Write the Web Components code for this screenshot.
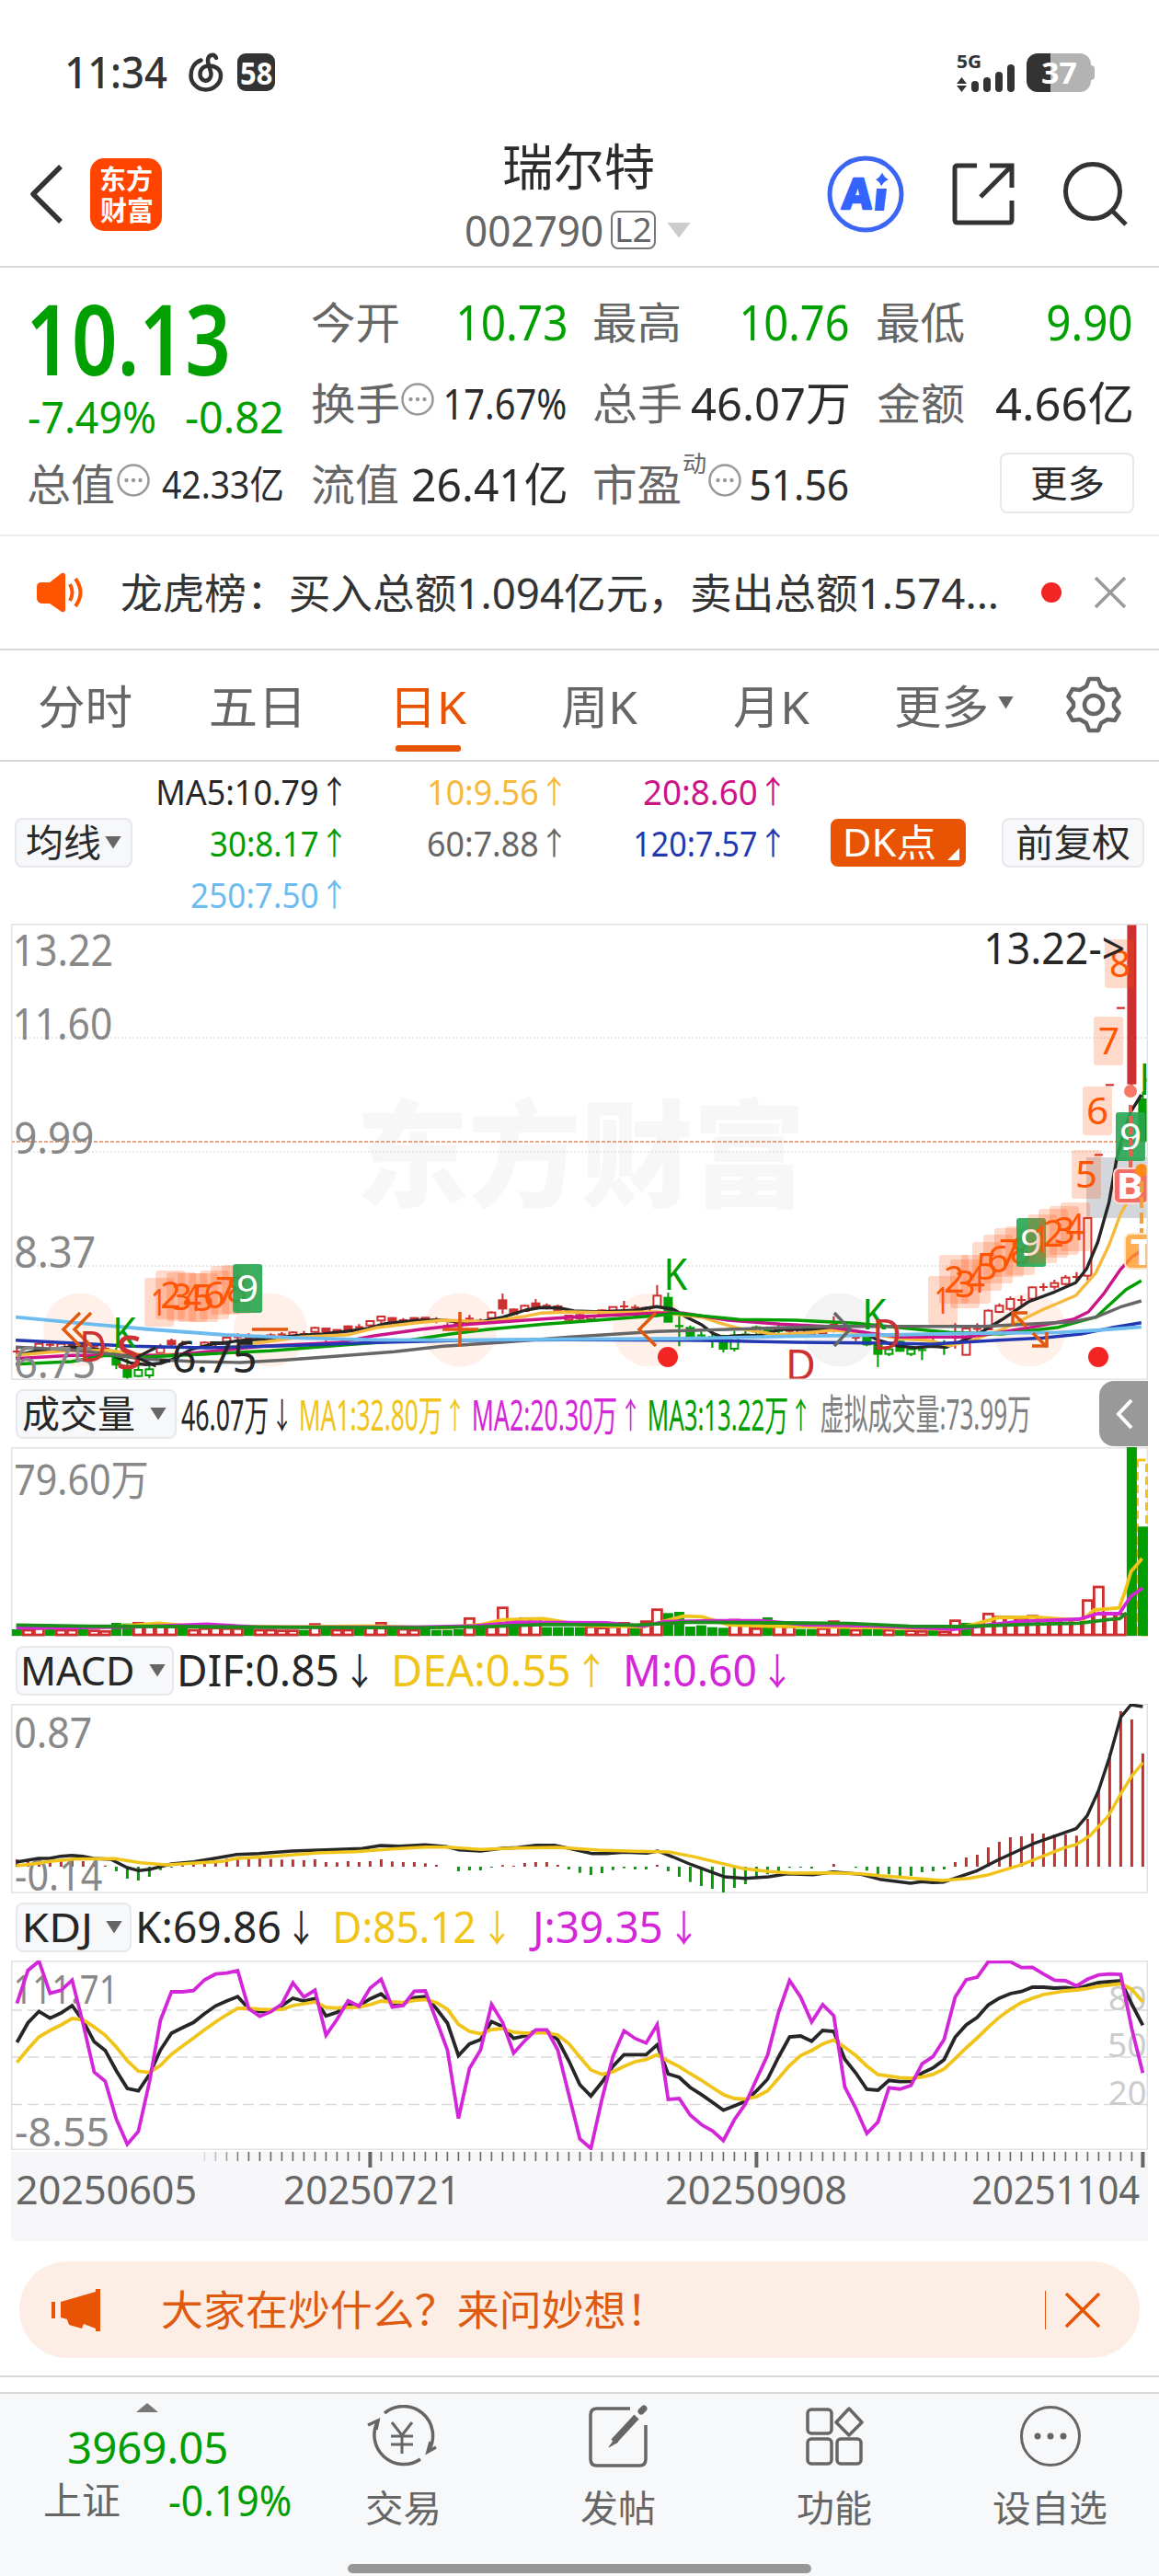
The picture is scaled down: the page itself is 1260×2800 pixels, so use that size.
<!DOCTYPE html>
<html lang="zh-CN">
  <head>
    <meta charset="UTF-8" />
    <meta name="viewport" content="width=device-width, initial-scale=1.0" />
    <title>瑞尔特 002790</title>
    <style>
      body {
        margin: 0;
        width: 1260px;
        height: 2800px;
        overflow: hidden;
        background: #fff;
        color: #2b2b2b;
        font-family: 'Noto Sans', 'Noto Sans CJK SC', sans-serif;
      }
    </style>
  </head>
  <body>
    <stock-page></stock-page>
    <script type="text/javascript">
      const FONT = "'Noto Sans', 'Noto Sans CJK SC', sans-serif"
      const RED = '#cc3030'
      const GREEN = '#009e00'
      const YELLOW = '#f0c419'
      const PINK = '#d426d9'
      const BLACK = '#262626'
      const ctx = document.createElement('canvas').getContext('2d')

      // ink box of a string: left bearing and painted width
      function measure(text, size, weight) {
        ctx.font = `${weight} ${size}px ${FONT}`
        const m = ctx.measureText(text)
        return { left: m.actualBoundingBoxLeft, width: m.actualBoundingBoxLeft + m.actualBoundingBoxRight }
      }

      function define(name, css, html) {
        customElements.define(
          name,
          class extends HTMLElement {
            constructor() {
              super()
              this.attachShadow({ mode: 'open' })
              const content = typeof html === 'function' ? html(this) : html
              this.shadowRoot.innerHTML = `<style>${css}</style>${content}`
            }
          }
        )
      }

      // text squeezed to a given ink width: <fit-text w="120" s="40">
      class FitText extends HTMLElement {
        connectedCallback() {
          const size = +this.getAttribute('s')
          const w = +this.getAttribute('w')
          const weight = this.getAttribute('b') || 400
          const m = measure(this.textContent, size, weight)
          if (!this.shadowRoot) this.attachShadow({ mode: 'open' })
          this.shadowRoot.innerHTML = `
            <style>
              :host { display: block; flex: none; width: ${w}px; height: ${size}px; font-size: ${size}px; line-height: ${size}px; font-weight: ${weight}; white-space: nowrap; }
              span { display: inline-block; transform-origin: 0 50%; transform: scaleX(${w / m.width}) translateX(${m.left}px); }
            </style>
            <span><slot></slot></span>
          `
        }
      }
      customElements.define('fit-text', FitText)

      define(
        'down-mark',
        `:host { display: block; flex: none; width: 18px; height: 14px; background: #666; clip-path: polygon(0 0, 100% 0, 50% 100%); }`,
        ``
      )

      define(
        'status-bar',
        `
          :host { display: flex; align-items: center; height: 121px; padding: 0 70px 0 73px; box-sizing: border-box; color: #333; }
          .row { display: flex; align-items: center; padding-top: 36px; }
          .grow { flex: 1; }
          .badge { width: 41px; height: 41px; border-radius: 9px; background: #333; color: #fff; display: flex; align-items: center; justify-content: center; margin-left: 16px; }
          .batt { width: 70px; height: 42px; border-radius: 12px; color: #fff; display: flex; align-items: center; justify-content: center; background: linear-gradient(90deg, #333 26px, #b3b3b3 26px); margin-left: 12px; }
          .nub { width: 4px; height: 16px; border-radius: 0 4px 4px 0; background: #b3b3b3; }
          svg { display: block; overflow: visible; }
        `,
        `
          <div class="row">
            <fit-text w="108" s="47" b="500">11:34</fit-text>
            <svg width="38" height="42" viewBox="0 0 38 42" style="margin-left:23px" fill="none" stroke="#333" stroke-width="4.500" stroke-linecap="round">
              <path d="M14.500 7.500C7 10 3.500 17 3.500 24A16.200 15.500 0 0 0 36 24C36 17 30 13.500 23 13.500C17 13.500 13.500 18 13.500 22.500A6 7 0 0 0 25.500 23C25.500 19 22 12 22 8C22 1 29 0 31 5" />
            </svg>
            <div class="badge"><fit-text w="34" s="34" b="700">58</fit-text></div>
          </div>
          <div class="grow"></div>
          <div class="row">
            <svg width="64" height="42" viewBox="0 0 64 42" fill="#333">
              <text x="0" y="16" font-size="20" font-weight="700" textLength="27" lengthAdjust="spacingAndGlyphs">5G</text>
              <path d="M0 33L5.500 26L11 33ZM0 35L5.500 42L11 35Z" />
              <rect x="16" y="30" width="8" height="12" rx="4" />
              <rect x="29" y="26" width="8" height="16" rx="4" />
              <rect x="42" y="20" width="8" height="22" rx="4" />
              <rect x="55" y="12" width="8" height="30" rx="4" />
            </svg>
            <div class="batt"><fit-text w="37" s="33" b="700">37</fit-text></div>
            <div class="nub"></div>
          </div>
        `
      )

      define(
        'nav-bar',
        `
          :host { display: grid; grid-template-columns: 1fr auto 1fr; align-items: center; height: 170px; padding: 12px 34px 0 32px; box-sizing: border-box; border-bottom: 2px solid #d9d9d9; }
          .left, .right, .code { display: flex; align-items: center; }
          .right { justify-content: flex-end; }
          .logo { width: 78px; height: 79px; margin-left: 30px; border-radius: 15px; background: #ff4400; color: #fff; display: flex; flex-direction: column; align-items: center; justify-content: center; gap: 5px; }
          .mid { display: flex; flex-direction: column; align-items: center; }
          .code { height: 42px; margin-top: 18px; color: #666; }
          .l2 { width: 45px; height: 38px; border: 2px solid #777; border-radius: 8px; margin-left: 9px; display: flex; align-items: center; justify-content: center; }
          down-mark { width: 26px; height: 17px; background: #ccc; margin-left: 12px; }
          svg { display: block; }
        `,
        `
          <div class="left">
            <svg width="36" height="64" viewBox="0 0 36 64" fill="none" stroke="#333" stroke-width="5.500"><path d="M34 2L4 32L34 62" stroke-linejoin="round" /></svg>
            <div class="logo"><fit-text w="56" s="29" b="700">东方</fit-text><fit-text w="56" s="29" b="700">财富</fit-text></div>
          </div>
          <div class="mid">
            <fit-text w="162" s="54" style="margin:3px 0">瑞尔特</fit-text>
            <div class="code"><fit-text w="148" s="46">002790</fit-text><div class="l2"><fit-text w="36" s="36">L2</fit-text></div><down-mark></down-mark></div>
          </div>
          <div class="right">
            <svg width="84" height="84" viewBox="0 0 84 84">
              <circle cx="42" cy="42" r="39" fill="none" stroke="#3b66f5" stroke-width="5" />
              <text transform="translate(16 58) skewX(-4)" font-size="46" font-weight="800" fill="#3464ff" textLength="32" lengthAdjust="spacingAndGlyphs" stroke="#3464ff" stroke-width="2.500" stroke-linejoin="round">A</text>
              <path d="M54 36H65L62 60H52Z" fill="#3464ff" />
              <path d="M60 17Q62 24 68 26Q62 28 59 34Q57 28 52 26Q58 24 60 17Z" fill="#3464ff" stroke="#fff" stroke-width="1" />
            </svg>
            <svg width="68" height="68" viewBox="0 0 68 68" style="margin-left:52px" fill="none" stroke="#333" stroke-width="5">
              <path d="M27 3H6Q3 3 3 6V62Q3 65 6 65H62Q65 65 65 62V41M41 3H65V27M65 3L31 37" />
            </svg>
            <svg width="70" height="70" viewBox="0 0 70 70" style="margin-left:53px" fill="none" stroke="#333" stroke-width="5"><circle cx="32" cy="32" r="29.500" /><path d="M53 53L68 68" /></svg>
          </div>
        `
      )

      define(
        'tip-dots',
        `:host { display: block; flex: none; margin: 0 0 8px 3px; height: 36px; } svg { display: block; }`,
        `<svg width="36" height="36" viewBox="0 0 36 36"><circle cx="18" cy="18" r="16.500" fill="none" stroke="#999" stroke-width="2.500" /><g fill="#999"><circle cx="10.500" cy="18" r="2.200" /><circle cx="18" cy="18" r="2.200" /><circle cx="25.500" cy="18" r="2.200" /></g></svg>`
      )

      define(
        'quote-cell',
        `:host { display: flex; align-items: center; height: 88px; } .label { display: flex; align-items: center; color: #666; flex: 1; }`,
        `<div class="label"><slot name="label"></slot></div><slot></slot>`
      )

      define(
        'quote-panel',
        `
          :host { display: block; height: 292px; box-sizing: border-box; border-bottom: 2px solid #ececec; padding: 15px 28px 0 31px; }
          .grid { display: grid; grid-template-columns: repeat(4, 276px); column-gap: 31.700px; grid-template-rows: repeat(3, 88px); }
          .price { grid-row: span 2; display: flex; flex-direction: column; color: #00a000; }
          .chg { display: flex; justify-content: space-between; margin-top: 10px; }
          .g { color: #00a000; }
          .more { justify-self: end; align-self: center; width: 142px; height: 62px; border: 2px solid #e8e8e8; border-radius: 8px; display: flex; align-items: center; justify-content: center; margin: -3px -3px 0 0; }
        `,
        `
          <div class="grid">
            <div class="price">
              <fit-text w="213" s="106" b="600" style="margin:8px 0 0 3px">10.13</fit-text>
              <div class="chg"><fit-text w="137" s="47">-7.49%</fit-text><fit-text w="105" s="47">-0.82</fit-text></div>
            </div>
            <quote-cell><fit-text slot="label" w="94" s="47">今开</fit-text><fit-text class="g" w="116" s="52">10.73</fit-text></quote-cell>
            <quote-cell><fit-text slot="label" w="93" s="47">最高</fit-text><fit-text class="g" w="115" s="52">10.76</fit-text></quote-cell>
            <quote-cell><fit-text slot="label" w="94" s="47">最低</fit-text><fit-text class="g" w="91" s="52">9.90</fit-text></quote-cell>
            <quote-cell><fit-text slot="label" w="94" s="47">换手</fit-text><tip-dots slot="label"></tip-dots><fit-text w="130" s="45">17.67%</fit-text></quote-cell>
            <quote-cell><fit-text slot="label" w="94" s="47">总手</fit-text><fit-text w="170" s="50">46.07万</fit-text></quote-cell>
            <quote-cell><fit-text slot="label" w="94" s="47">金额</fit-text><fit-text w="147" s="50">4.66亿</fit-text></quote-cell>
            <quote-cell><fit-text slot="label" w="93" s="47">总值</fit-text><tip-dots slot="label"></tip-dots><fit-text w="131" s="42">42.33亿</fit-text></quote-cell>
            <quote-cell><fit-text slot="label" w="94" s="47">流值</fit-text><fit-text w="166" s="50">26.41亿</fit-text></quote-cell>
            <quote-cell><fit-text slot="label" w="93" s="47">市盈</fit-text><fit-text slot="label" w="24" s="25" style="align-self:flex-start;margin:-12px 0 0 4px">动</fit-text><tip-dots slot="label"></tip-dots><fit-text w="106" s="46">51.56</fit-text></quote-cell>
            <div class="more"><fit-text w="78" s="40">更多</fit-text></div>
          </div>
        `
      )

      define(
        'notice-bar',
        `
          :host { display: flex; align-items: center; height: 124px; box-sizing: border-box; border-bottom: 2px solid #d9d9d9; padding-left: 40px; color: #333; }
          .dot { width: 22px; height: 22px; border-radius: 50%; background: #f22424; margin: 0 36px 0 49px; }
        `,
        `
          <svg width="51" height="44" viewBox="0 0 51 44"><path d="M5 11H14L27 1Q31 0 31 4V40Q31 44 27 43L14 34H5Q0 33 0 28V16Q0 11 5 11Z" fill="#ff5500" /><path d="M36 13Q41 22 36 31M42 7Q53 22 42 37" fill="none" stroke="#ff5500" stroke-width="4" /></svg>
          <fit-text w="951" s="45" style="margin-left:41px">龙虎榜：买入总额1.094亿元，卖出总额1.574...</fit-text>
          <div class="dot"></div>
          <svg width="34" height="34" viewBox="0 0 34 34" stroke="#999" stroke-width="3.500"><path d="M1 1L33 33M33 1L1 33" /></svg>
        `
      )

      define(
        'tab-item',
        `
          :host { display: flex; flex-direction: column; align-items: center; flex: none; color: #666; }
          :host([active]) { color: #e85404; }
          i { width: 71px; height: 7px; border-radius: 3px; margin: 17px 6px 0 0; }
          :host([active]) i { background: #e85404; }
        `,
        `<slot></slot><i></i>`
      )

      define(
        'period-tabs',
        `
          :host { display: flex; align-items: center; height: 121px; box-sizing: border-box; border-bottom: 2px solid #d9d9d9; padding: 26px 0 0 43px; }
          down-mark { margin: -32px 57px 0 12px; width: 17px; }
          svg { margin-top: -27px; }
        `,
        `
          <tab-item><fit-text w="100" s="50">分时</fit-text></tab-item>
          <tab-item style="margin-left:86px"><fit-text w="96" s="50">五日</fit-text></tab-item>
          <tab-item active style="margin-left:105px"><fit-text w="76" s="50">日K</fit-text></tab-item>
          <tab-item style="margin-left:104px"><fit-text w="82" s="50">周K</fit-text></tab-item>
          <tab-item style="margin-left:105px"><fit-text w="82" s="50">月K</fit-text></tab-item>
          <tab-item style="margin-left:94px"><fit-text w="99" s="50">更多</fit-text></tab-item>
          <down-mark></down-mark>
          <svg width="60" height="62" viewBox="0 0 60 62" fill="none" stroke="#666" stroke-width="4.500" stroke-linejoin="round">
            <path d="M25 3H35L38 11L45 15L53 14L57.500 22L52 29V33L57.500 40L53 48L45 47L38 51L35 59H25L22 51L15 47L7 48L2.500 40L8 33V29L2.500 22L7 14L15 15L22 11Z" /><circle cx="30" cy="31" r="10" />
          </svg>
        `
      )

      define(
        'chip-button',
        `
          :host { display: flex; align-items: center; flex: none; box-sizing: border-box; height: 54px; border: 2px solid #e6e8eb; border-radius: 8px; background: #f7f8fa; }
          :host([hot]) { background: #e85404; border-color: #e85404; color: #fff; height: 52px; }
        `,
        `<slot></slot>`
      )

      define(
        'ma-item',
        `:host { display: flex; align-items: center; justify-content: flex-end; height: 56px; } fit-text { margin-left: 11px; }`,
        `<slot></slot><fit-text w="15" s="34">↑</fit-text>`
      )

      define(
        'ma-legend',
        `
          :host { display: flex; align-items: center; height: 176px; box-sizing: border-box; padding: 0 0 1px 16px; }
          .grid { display: grid; grid-template-columns: 227px 239px 238px; }
          svg { margin: 25px 0 0 14px; }
        `,
        `
          <chip-button style="width:128px"><fit-text w="80" s="41" style="margin:0 5px 0 11px">均线</fit-text><down-mark></down-mark></chip-button>
          <div class="grid">
            <ma-item style="color:${BLACK}"><fit-text w="173" s="38">MA5:10.79</fit-text></ma-item>
            <ma-item style="color:#f6b93c"><fit-text w="117" s="38">10:9.56</fit-text></ma-item>
            <ma-item style="color:#cc1489"><fit-text w="122" s="38">20:8.60</fit-text></ma-item>
            <ma-item style="color:${GREEN}"><fit-text w="116" s="38">30:8.17</fit-text></ma-item>
            <ma-item style="color:#666"><fit-text w="118" s="38">60:7.88</fit-text></ma-item>
            <ma-item style="color:#2337b0"><fit-text w="131" s="38">120:7.57</fit-text></ma-item>
            <ma-item style="color:#6cbcf0"><fit-text w="137" s="38">250:7.50</fit-text></ma-item>
          </div>
          <chip-button hot style="width:147px;margin-left:55px"><fit-text w="97" s="41" style="margin-left:14px">DK点</fit-text><svg width="13" height="13" style="margin:25px 0 0 14px"><path d="M13 0V13H0Z" fill="#fff" /></svg></chip-button>
          <chip-button style="width:155px;margin-left:39px"><fit-text w="122" s="41" style="margin-left:15px">前复权</fit-text></chip-button>
        `
      )

      define(
        'indicator-head',
        `:host { display: flex; align-items: center; height: 73px; padding-left: 17px; color: ${BLACK}; }`,
        `<slot></slot>`
      )

      // ---- charts -------------------------------------------------------

      const slotX = i => 18.4 + 12 * i

      function label(x, y, w, text, size, color, weight = 400) {
        const m = measure(String(text), size, weight)
        const k = w / m.width
        const safe = String(text).replace(/</g, '&lt;').replace(/>/g, '&gt;')
        return `<text transform="translate(${x + m.left * k} ${y}) scale(${k} 1)" font-size="${size}" font-weight="${weight}" fill="${color}">${safe}</text>`
      }

      // "x,y x,y ..." in sampling units, sx/sy units per pixel, y counted from oy
      function curve(pts, sx, sy, oy, color, width = 3.8) {
        const p = pts
          .trim()
          .split(/\s+/)
          .map(s => s.split(','))
          .map(([x, y]) => `${(x / sx).toFixed(1)},${(oy + y / sy).toFixed(1)}`)
        return `<polyline points="${p.join(' ')}" fill="none" stroke="${color}" stroke-width="${width}" stroke-linejoin="round" />`
      }

      function series(ys, oy, color) {
        const p = ys.map((y, i) => `${slotX(i)},${(oy + y / 3).toFixed(1)}`)
        return `<polyline points="${p.join(' ')}" fill="none" stroke="${color}" stroke-width="3.800" />`
      }

      const frame = (y, h) => `<rect x="12.500" y="${y + 0.5}" width="1235" height="${h - 1}" fill="none" stroke="#e2e2e2" stroke-width="2" />`

      const chartCss = `:host { display: block; } svg { display: block; margin-left: 12px; font-family: ${FONT}; }`

      function chart(name, y, h, draw) {
        define(name, chartCss, () => `<svg width="1236" height="${h}" viewBox="12 ${y} 1236 ${h}">${draw()}</svg>`)
      }

      // slot, colour, style (h hollow, f filled, x cross), high, top, bottom, low
      const candles = `
        0 r x 1427 1437 1437 1447;2 r h 1408 1412 1425 1428;3 r x 1405 1415 1415 1428;4 r h 1408 1412 1426 1430;5 r x 1408 1416 1416 1426
        6 r f 1410 1414 1424 1428;7 r x 1410 1420 1420 1430;8 r x 1418 1428 1428 1440;9 g f 1425 1440 1480 1495;10 g f 1460 1490 1520 1530
        11 g h 1480 1497 1517 1520;12 g h 1470 1495 1515 1525;13 r h 1412 1425 1442 1450;14 r f 1395 1402 1414 1422;15 r x 1402 1413 1413 1422
        17 r h 1405 1408 1418 1420;18 r x 1405 1412 1412 1420;19 r h 1388 1392 1408 1412;20 r x 1378 1390 1390 1404;21 r x 1378 1392 1392 1404
        22 r f 1382 1388 1396 1400;23 r h 1378 1384 1394 1396;24 r x 1374 1382 1382 1394;25 r h 1372 1375 1385 1388;26 r x 1370 1380 1380 1390
        27 r h 1356 1360 1373 1376;28 r f 1360 1362 1372 1412;29 r f 1364 1367 1374 1376;30 r f 1352 1355 1368 1372;31 r x 1348 1358 1358 1368
        32 r h 1335 1338 1352 1355;33 r h 1320 1323 1336 1350;34 r f 1325 1328 1340 1345;35 r x 1328 1335 1335 1345;36 r f 1325 1328 1338 1345
        37 r f 1325 1327 1336 1340;38 r x 1325 1333 1333 1345;39 r x 1345 1354 1354 1368;40 r f 1342 1346 1354 1360;41 r x 1318 1330 1330 1345
        42 r x 1330 1338 1338 1345;43 r h 1306 1310 1328 1332;44 r f 1248 1270 1297 1315;45 r f 1297 1300 1315 1318;46 r h 1285 1288 1305 1308
        47 r f 1266 1280 1290 1300;48 r x 1280 1288 1288 1300;49 r f 1284 1290 1306 1310;50 r h 1318 1320 1334 1338;51 r h 1315 1318 1330 1335
        52 r h 1317 1320 1332 1335;53 r h 1300 1303 1318 1320;54 r h 1290 1292 1304 1306;55 r x 1272 1290 1290 1302;56 r x 1285 1294 1294 1304
        57 r h 1290 1295 1310 1315;58 r h 1220 1255 1290 1295;59 g f 1245 1262 1340 1342;60 g x 1310 1354 1354 1420;61 g f 1352 1360 1386 1390
        62 g x 1372 1385 1385 1405;63 g x 1370 1390 1390 1425;64 g f 1382 1386 1428 1440;65 g h 1370 1385 1428 1437;66 g x 1370 1382 1382 1395
        67 g h 1352 1358 1372 1390;68 g f 1355 1362 1375 1380;69 g x 1350 1370 1370 1390;70 r x 1355 1370 1370 1385;71 r h 1360 1366 1376 1380
        72 r x 1365 1380 1380 1392;73 r h 1360 1368 1378 1380;74 r x 1322 1350 1350 1375;75 r h 1352 1360 1370 1374;76 r x 1380 1392 1392 1403
        77 g f 1385 1390 1414 1420;78 g f 1405 1415 1445 1488;79 g h 1420 1430 1445 1452;80 g f 1400 1405 1435 1438;81 g h 1422 1430 1445 1452
        82 g x 1420 1432 1432 1465;83 r x 1370 1390 1390 1410;84 g x 1400 1424 1424 1448;85 r x 1345 1390 1390 1427;86 r h 1358 1362 1448 1450
        87 r x 1345 1363 1363 1378;88 r h 1300 1304 1365 1368;89 r h 1280 1288 1308 1312;90 r h 1258 1266 1298 1304;91 r x 1255 1269 1269 1284
        92 r h 1225 1228 1265 1270;93 r x 1214 1227 1227 1240;94 r h 1203 1214 1226 1235;95 r h 1188 1196 1217 1222;96 r x 1178 1194 1194 1210
        97 r h 1000 1002 1190 1205;98 r x 796 796 796 796;99 r x 568 568 568 568;100 r x 317 317 317 317;101 r f 42 42 563 592
        102 g f 590 615 750 750`

      function drawCandles() {
        return candles
          .trim()
          .split(/[;\n]/)
          .map(row => {
            const [i, c, kind, ...v] = row.trim().split(' ')
            const [hi, top, bot, lo] = v.map(n => 990 + n / 3)
            const x = slotX(+i)
            const color = c === 'r' ? RED : GREEN
            if (kind === 'x') return `<path d="M${x} ${hi}V${lo}M${x - 4.5} ${top}H${x + 4.5}" stroke="${color}" stroke-width="2.200" />`
            const hollow = kind === 'h'
            return `<path d="M${x} ${hi}V${top}M${x} ${bot}V${lo}" stroke="${color}" stroke-width="2" /><rect x="${x - 4}" y="${top}" width="8" height="${bot - top}" fill="${hollow ? '#fff' : color}" stroke="${color}" stroke-width="2" />`
          })
          .join('')
      }

      // numbered marks that step one slot to the right each
      function marks(list) {
        return list
          .map(([n, x, y]) => {
            const nine = n === 9
            return `<rect x="${x}" y="${y}" width="32" height="53" rx="3" fill="${nine ? '#27a550' : '#ff5c14'}" fill-opacity="${nine ? 0.9 : 0.23}" />${label(x + (n === 1 ? 9 : 6), y + 41, n === 1 ? 9 : 20, n, 40, nine ? '#fff' : '#ff5500')}`
          })
          .join('')
      }

      chart('price-chart', 1004, 496, () => {
        const discs = [87, 294, 500, 706, 913, 1119].map((x, i) => `<circle cx="${x}" cy="1445.500" r="40" fill="${i === 4 ? '#f3f3f3' : '#fff1e9'}" />`)
        const grid = [1128, 1252, 1376].map(y => `<path d="M12 ${y}H1248" stroke="#e2e2e2" stroke-width="1.500" stroke-dasharray="2 2" />`)
        const first = [1389, 1381, 1383, 1384, 1384, 1381, 1376, 1375, 1374].map((y, i) => [i + 1, 157.2 + 12 * i, y])
        const second = [1387, 1364, 1369, 1364, 1350, 1342, 1335, 1333, 1324].map((y, i) => [i + 1, 1009 + 12 * i, y])
        const third = [1320, 1314, 1311, 1307, 1250, 1181, 1105, 1021, 1209].map((y, i) => [i + 1, 1117 + 12 * i, y])
        return `
          ${label(393, 1302, 475, '东方财富', 126, '#f7f7f7', 900)}
          ${grid.join('')}
          ${discs.join('')}
          <rect x="1181" y="1258" width="67" height="66" fill="#d3d6db" />
          ${drawCandles()}
          ${curve('42,1450 90,1437 190,1422 260,1430 300,1450 350,1475 390,1480 430,1475 460,1462 510,1430 570,1412 650,1400 720,1395 790,1385 860,1380 930,1370 980,1362 1020,1348 1060,1342 1120,1335 1180,1335 1230,1342 1290,1338 1340,1325 1400,1302 1440,1294 1490,1295 1529,1305 1599,1308 1689,1303 1749,1291 1794,1300 1829,1325 1869,1350 1899,1378 1924,1390 1969,1385 2019,1385 2079,1365 2219,1365 2299,1375 2339,1400 2389,1418 2439,1425 2479,1420 2519,1423 2569,1400 2619,1370 2669,1333 2739,1275 2809,1243 2865,1213 2894,1168 2924,1080 2954,950 2974,810 2994,720 3012,655 3040,600', 2.45, 3, 990, BLACK, 3.4)}
          ${curve('42,1450 170,1435 290,1433 390,1450 450,1447 550,1445 600,1425 680,1410 740,1400 800,1390 930,1382 1000,1360 1100,1345 1180,1335 1300,1340 1400,1322 1440,1312 1519,1308 1619,1310 1749,1308 1869,1325 1919,1345 1969,1362 2069,1382 2139,1378 2219,1367 2309,1378 2399,1395 2479,1402 2529,1418 2579,1405 2669,1365 2779,1300 2865,1255 2919,1180 2954,1090 2984,990 3009,935 3040,900', 2.45, 3, 990, '#f6b93c', 3.4)}
          ${curve('42,1460 190,1450 450,1450 700,1420 900,1408 1000,1385 1120,1365 1230,1350 1400,1335 1519,1325 1749,1312 1819,1312 1939,1335 2079,1348 2199,1355 2319,1378 2399,1390 2569,1390 2639,1380 2739,1360 2859,1332 2899,1308 2939,1250 2984,1170 3014,1130 3040,1107', 2.45, 3, 990, '#cc1489', 3.4)}
          ${curve('42,1478 190,1470 280,1450 390,1455 550,1445 720,1435 920,1415 1090,1400 1200,1380 1300,1365 1450,1348 1519,1342 1749,1320 1799,1312 1969,1333 2119,1335 2279,1345 2419,1362 2529,1375 2669,1380 2819,1358 2919,1325 2959,1280 2999,1235 3040,1206', 2.45, 3, 990, GREEN, 3.4)}
          ${curve('42,1423 190,1432 290,1445 370,1460 520,1470 640,1473 760,1465 900,1452 1050,1438 1180,1420 1330,1408 1519,1390 1749,1372 1939,1365 2079,1360 2199,1355 2619,1355 2739,1348 2859,1340 2919,1325 2984,1292 3040,1272', 2.45, 3, 990, '#666', 3.4)}
          ${curve('42,1400 200,1410 350,1420 550,1425 760,1418 1000,1408 1250,1400 1519,1399 1819,1400 2119,1407 2369,1410 2479,1413 2659,1400 2779,1393 2879,1380 2959,1360 3040,1343', 2.45, 3, 990, '#2337b0', 3.4)}
          ${curve('42,1325 190,1342 400,1365 600,1383 800,1393 1000,1399 1200,1400 1519,1397 1819,1395 2119,1387 2369,1383 2569,1378 2819,1375 2919,1368 3040,1357', 2.45, 3, 990, '#6cbcf0')}
          <path d="M12 1241H1248" stroke="#e08a5c" stroke-width="1.500" stroke-dasharray="4 2" />
          <g fill="none" stroke="#e0590f" stroke-width="3.500">
            <path d="M87 1427L69 1445L87 1463M99 1427L81 1445L99 1463M274 1445H313M481 1445H520M500 1426V1464M713 1427L695 1445L713 1463" />
            <path d="M1116 1442L1101 1427M1101 1441V1427H1117M1123 1449L1138 1464M1138 1448V1463H1122" />
            <path d="M907 1427L924 1445L907 1463" stroke="#666" />
          </g>
          ${marks(first)}
          ${marks(second)}
          ${label(17, 1050, 104, '13.22', 48, '#888')}
          ${label(17, 1130, 104, '11.60', 48, '#888')}
          ${label(17, 1254, 83, '9.99', 48, '#888')}
          ${label(17, 1378, 86, '8.37', 48, '#888')}
          ${label(17, 1498, 85, '6.75', 48, '#888')}
          ${label(90, 1480, 24, 'D', 45, RED)}
          ${label(126, 1465, 22, 'K', 45, GREEN)}
          ${label(128, 1488, 25, 'S', 50, RED, 500)}
          ${label(147, 1492, 130, '<-6.75', 48, BLACK)}
          ${label(725, 1402, 23, 'K', 47, GREEN)}
          ${label(941, 1445, 23, 'K', 46, GREEN)}
          ${label(858, 1500, 27, 'D', 45, RED)}
          ${label(952, 1467, 26, 'D', 45, RED)}
          ${label(1242, 1190, 23, 'K', 47, GREEN)}
          <circle cx="726" cy="1475" r="11" fill="#f22424" /><circle cx="1194" cy="1475" r="11" fill="#f22424" />
          ${marks(third)}
          ${label(1073, 1048, 149, '13.22->', 48, BLACK)}
          <circle cx="1229" cy="1186" r="7" fill="#f87868" />
          <path d="M1229 1201V1269" stroke="#e8604e" stroke-width="4" stroke-dasharray="8 4" />
          <rect x="1211" y="1270" width="38" height="38" rx="6" fill="#f26d62" stroke="#fbdcd8" stroke-width="2" />
          ${label(1217, 1303, 24, 'B', 39, '#fff', 700)}
          <circle cx="1241" cy="1272" r="7" fill="#ff8a14" />
          <path d="M1241 1284V1340" stroke="#eda03c" stroke-width="4" stroke-dasharray="12 5" />
          <rect x="1223" y="1341" width="38" height="38" rx="6" fill="#ff9a26" fill-opacity="0.800" stroke="#ffe6c8" stroke-width="2" />
          ${label(1229, 1375, 25, 'T', 39, '#fff', 700)}
          ${frame(1004, 496)}
        `
      })

      const volumes =
        'g843 r843 r838 g835 r843 r843 g840 r845 r847 g822 g824 r820 r826 r824 r830 g836 r843 r838 r836 r838 r838 g838 r843 r843 r845 r845 g845 r824 g838 r843 r843 g843 r830 r820 g838 r840 r843 g843 g845 g845 g843 r805 g832 r832 r770 g820 r805 r807 g836 g836 g836 g836 r832 r836 r832 r820 g838 r815 r776 g790 g786 g834 g830 g836 g838 r810 r814 r838 g804 r826 r832 g842 g842 r838 r815 g836 r843 g838 g838 r843 g845 r845 r847 g843 r848 r812 g822 r826 r790 r800 r800 r805 r797 r806 r808 r808 r808 r746 r702 r787 r790 g249 g508'

      chart('volume-chart', 1573, 206, () => {
        const bars = volumes.split(' ').map((v, i) => {
          const y = 1490 + v.slice(1) / 3
          const x = slotX(i)
          return v[0] === 'g'
            ? `<rect x="${x - 5.5}" y="${y}" width="11" height="${1778 - y}" fill="${GREEN}" />`
            : `<rect x="${x - 5}" y="${y + 1}" width="10" height="${1776 - y}" fill="#fff" stroke="${RED}" stroke-width="2.800" />`
        })
        return `
          ${frame(1573, 206)}
          <rect x="1236.500" y="1587" width="10" height="190" fill="#fff" stroke="${YELLOW}" stroke-width="3" stroke-dasharray="9 5" />
          ${bars.join('')}
          ${label(17, 1625, 143, '79.60万', 46, '#888')}
          ${curve('22,832 60,838 150,835 215,823 260,833 400,835 500,832 600,838 650,828 680,812 735,808 790,830 870,835 925,800 950,802 985,828 1040,833 1120,835 1200,838 1285,843 1320,825 1350,805 1400,803 1450,812 1466,810 1480,780 1514,773 1522,720 1530,655 1545,612', 1.2444, 3, 1490, YELLOW)}
          ${curve('22,838 90,838 180,835 280,826 350,836 560,836 640,832 700,820 820,822 870,833 900,818 960,815 1030,815 1090,828 1180,832 1290,843 1340,828 1380,817 1460,810 1485,792 1514,792 1530,735 1546,708', 1.2444, 3, 1490, PINK)}
          ${curve('22,829 120,833 240,834 350,836 560,838 650,835 740,827 860,829 930,820 1060,822 1150,824 1230,833 1300,834 1400,826 1460,823 1500,811 1515,808 1524,790', 1.2444, 3, 1490, '#1a8f1a')}
        `
      })

      const macd = [
        543, 545, 541, 547, 545, 541, 549, 558, 563, 582, 606, 612, 600, 578, 570, 562, 556, 550, 546, 541, 537, 538, 540, 542, 544, 544, 546, 543, 552, 553, 549, 552, 549, 543, 550,
        552, 552, 556, 561, 567, 582, 579, 579, 570, 562, 564, 555, 552, 552, 561, 576, 587, 594, 588, 578, 572, 576, 576, 561, 582, 600, 617, 630, 639, 651, 636, 624, 604, 592, 582,
        571, 570, 573, 567, 558, 567, 571, 580, 595, 592, 597, 597, 585, 582, 576, 552, 537, 528, 504, 486, 471, 468, 459, 459, 462, 462, 466, 411, 320, 198, 60, 87, 198,
      ]

      chart('macd-chart', 1852, 206, () => {
        const bars = macd.map((v, i) => `<path d="M${slotX(i)} 2029V${(1840 + v / 3).toFixed(1)}" stroke="${v < 567 ? '#c62f2f' : GREEN}" stroke-width="3" />`)
        return `
          ${frame(1852, 206)}
          ${bars.join('')}
          ${label(17, 1900, 82, '0.87', 46, '#888')}
          ${label(17, 2055, 94, '-0.14', 46, '#888')}
          ${curve('22,552 52,540 67,540 82,533 97,530 112,533 126,540 150,543 172,570 188,580 204,575 232,558 262,551 290,540 320,527 350,524 395,516 440,512 490,508 515,498 540,500 575,496 605,502 620,512 650,516 680,507 700,505 725,497 750,497 775,510 800,524 820,524 845,520 875,523 890,516 910,535 935,560 980,600 1008,605 1040,600 1065,590 1100,593 1127,584 1165,592 1190,608 1232,621 1247,616 1262,619 1277,617 1322,580 1350,545 1400,490 1445,452 1456,443 1471,400 1486,320 1501,210 1516,80 1530,39 1546,45', 1.2444, 3, 1840, BLACK, 3.4)}
          ${curve('22,564 45,558 70,549 100,542 155,541 190,554 225,561 260,556 300,550 320,540 370,533 430,522 480,518 530,509 575,503 605,503 650,511 700,506 755,504 810,513 860,517 905,519 940,535 1005,573 1040,583 1070,588 1127,587 1165,590 1190,596 1230,604 1275,612 1310,605 1335,595 1380,562 1440,505 1456,495 1475,465 1500,400 1516,330 1531,272 1546,228', 1.2444, 3, 1840, YELLOW, 3.4)}
        `
      })

      const kLine = [
        330, 266, 229, 251, 234, 210, 260, 328, 356, 422, 480, 488, 435, 355, 300, 282, 265, 236, 211, 195, 181, 220, 230, 228, 210, 186, 195, 187, 244, 232, 205, 210, 188, 172, 205,
        205, 184, 181, 220, 267, 373, 335, 321, 262, 278, 317, 309, 292, 292, 322, 390, 468, 505, 460, 408, 370, 370, 370, 338, 433, 444, 477, 500, 525, 551, 537, 522, 488, 450, 378,
        312, 309, 326, 291, 294, 385, 430, 483, 486, 454, 458, 457, 430, 413, 386, 313, 273, 248, 208, 186, 171, 164, 150, 150, 153, 151, 155, 144, 135, 132, 129, 205, 274,
      ]
      const dLine = [
        395, 352, 312, 291, 273, 252, 256, 280, 307, 345, 390, 424, 428, 405, 369, 342, 316, 289, 263, 240, 219, 219, 222, 223, 222, 210, 204, 198, 216, 218, 216, 215, 207, 195, 198,
        200, 193, 190, 200, 222, 271, 294, 302, 288, 285, 297, 300, 299, 298, 306, 334, 378, 420, 434, 426, 408, 393, 386, 370, 391, 409, 432, 453, 477, 500, 513, 515, 507, 488, 447,
        405, 373, 356, 335, 322, 346, 373, 407, 435, 440, 445, 447, 443, 434, 417, 383, 348, 315, 280, 248, 222, 200, 186, 174, 168, 162, 159, 154, 147, 143, 139, 157, 198,
      ]
      const jLine = [
        203, 95, 65, 170, 160, 127, 270, 427, 457, 580, 662, 620, 460, 258, 165, 165, 161, 126, 107, 104, 96, 220, 245, 230, 205, 136, 182, 160, 307, 255, 194, 212, 153, 124, 215,
        210, 163, 162, 258, 355, 578, 415, 355, 206, 265, 365, 325, 289, 289, 355, 500, 645, 676, 515, 375, 292, 317, 332, 272, 516, 513, 567, 598, 618, 650, 582, 530, 450, 372, 232,
        128, 182, 263, 207, 243, 475, 545, 627, 590, 478, 482, 470, 400, 376, 320, 182, 126, 117, 67, 66, 67, 86, 85, 107, 127, 129, 146, 124, 110, 107, 108, 285, 430,
      ]

      chart('kdj-chart', 2131, 206, () => {
        const grid = [2185, 2236, 2287.5].map(y => `<path d="M12 ${y}H1248" stroke="#dadada" stroke-width="1.500" stroke-dasharray="12 6" />`)
        return `
          ${frame(2131, 206)}
          ${grid.join('')}
          ${label(17, 2178, 104, '111.71', 44, '#888')}
          ${label(17, 2333, 100, '-8.55', 44, '#888')}
          ${label(1206, 2185, 39, '80', 36, '#ccc')}
          ${label(1206, 2236, 39, '50', 36, '#ccc')}
          ${label(1206, 2288, 39, '20', 36, '#ccc')}
          ${series(kLine, 2110, BLACK)}
          ${series(dLine, 2110, YELLOW)}
          ${series(jLine, 2110, PINK)}
        `
      })

      chart('date-axis', 2337, 99, () => {
        let ticks = ''
        for (let i = 17; i < 103; i++) {
          const big = i === 32 || i === 67 || i === 102
          ticks += `<path d="M${slotX(i)} 2339V${big ? 2356 : 2349}" stroke="#666" stroke-width="${big ? 4 : 1.6}" opacity="${Math.min(1, (i - 16) / 5)}" />`
        }
        return `
          <rect x="12" y="2339" width="1236" height="97" fill="#f7f7fa" />
          ${ticks}
          ${label(19, 2396, 193, '20250605', 44, '#666')}
          ${label(310, 2396, 182, '20250721', 44, '#666')}
          ${label(725, 2396, 194, '20250908', 44, '#666')}
          ${label(1058, 2396, 181, '20251104', 44, '#666')}
        `
      })

      define(
        'ask-banner',
        `
          :host { display: flex; align-items: center; height: 105px; margin: 22px 21px 19px; padding-left: 35px; box-sizing: border-box; border-radius: 52px; background: #fdeee5; color: #dd5a10; }
          .bar { width: 1px; height: 42px; background: #dd5a10; margin: 0 21px 0 440px; }
        `,
        `
          <svg width="53" height="46" viewBox="0 0 53 46" fill="#e85404"><path d="M0 14H4V32H0ZM10 14L48 3V0H53V46H48V43L35 38L33 43L19 39L17 33L10 31Z" /></svg>
          <fit-text w="520" s="45" style="margin-left:67px">大家在炒什么？来问妙想！</fit-text>
          <div class="bar"></div>
          <svg width="38" height="38" viewBox="0 0 38 38" stroke="#e85404" stroke-width="3.500"><path d="M1 1L37 37M37 1L1 37" /></svg>
        `
      )

      define(
        'nav-item',
        `:host { display: flex; flex-direction: column; align-items: center; width: 235px; padding-top: 12px; color: #666; } ::slotted(svg) { display: block; margin-bottom: 24px; }`,
        `<slot></slot>`
      )

      define(
        'bottom-bar',
        `
          :host { display: block; border-top: 2px solid #d9d9d9; margin-top: 16px; height: 198px; background: #f7f8fa; }
          .row { display: flex; height: 184px; }
          .index { width: 319px; display: flex; flex-direction: column; align-items: center; color: ${GREEN}; padding: 10px 0 0 1px; box-sizing: border-box; }
          .up { width: 24px; height: 10px; background: #777; clip-path: polygon(50% 0, 100% 100%, 0 100%); }
          .line { display: flex; align-items: center; margin: 11px 0 0 44px; gap: 54px; }
          .home { width: 504px; height: 10px; border-radius: 5px; background: #979797; margin: 1px auto 0; }
        `,
        `
          <div class="row">
            <div class="index">
              <div class="up"></div>
              <fit-text w="171" s="48" style="margin-top:14px">3969.05</fit-text>
              <div class="line"><fit-text w="81" s="41" style="color:#666">上证</fit-text><fit-text w="132" s="45">-0.19%</fit-text></div>
            </div>
            <nav-item>
              <svg width="76" height="68" viewBox="0 0 76 68" fill="none" stroke="#666" stroke-width="3.500"><path d="M19 9A32 32 0 0 1 67 50M58 59A32 32 0 0 1 12 17" /><path d="M1 22L12 17L10 27M75 46L66 51L69 40" /><path d="M27 19L38 33L49 19M38 33V53M26 34H50M26 43H50" stroke-width="3" /></svg>
              <fit-text w="78" s="40">交易</fit-text>
            </nav-item>
            <nav-item>
              <svg width="64" height="68" viewBox="0 0 64 68" fill="none" stroke="#666" stroke-width="3.500"><path d="M45 4H9Q2 4 2 11V59Q2 66 9 66H55Q62 66 62 59V22" /><path d="M57 7L60 4" stroke-width="7" stroke-linecap="round" /><path d="M52 13L27 40" stroke-width="7" /><path d="M29 36L22 46L32 40" fill="#666" stroke-width="1" /></svg>
              <fit-text w="80" s="40">发帖</fit-text>
            </nav-item>
            <nav-item>
              <svg width="64" height="68" viewBox="0 0 64 68" fill="none" stroke="#666" stroke-width="3.500"><rect x="3" y="5" width="26" height="26" rx="4" /><rect x="3" y="37" width="26" height="27" rx="4" /><rect x="35" y="37" width="26" height="27" rx="4" /><path d="M48 4L62 19L48 33L34 19Z" stroke-linejoin="round" /></svg>
              <fit-text w="80" s="40">功能</fit-text>
            </nav-item>
            <nav-item>
              <svg width="68" height="68" viewBox="0 0 68 68"><circle cx="34" cy="34" r="31.500" fill="none" stroke="#666" stroke-width="3" /><g fill="#666"><circle cx="20" cy="34" r="3.500" /><circle cx="34" cy="34" r="3.500" /><circle cx="48" cy="34" r="3.500" /></g></svg>
              <fit-text w="123" s="40">设自选</fit-text>
            </nav-item>
          </div>
          <div class="home"></div>
        `
      )

      define(
        'stock-page',
        `
          :host { display: flex; flex-direction: column; width: 1260px; }
          .fold { width: 53px; height: 71px; margin: 0 12px 0 auto; border-radius: 16px 0 0 16px; background: #999; display: flex; align-items: center; justify-content: center; }
          .rule { height: 2px; background: #d9d9d9; }
          .y { color: ${YELLOW}; }
          .p { color: ${PINK}; }
          .g { color: ${GREEN}; }
        `,
        `
          <status-bar></status-bar>
          <nav-bar></nav-bar>
          <quote-panel></quote-panel>
          <notice-bar></notice-bar>
          <period-tabs></period-tabs>
          <ma-legend></ma-legend>
          <price-chart></price-chart>
          <indicator-head>
            <chip-button style="width:175px"><fit-text w="121" s="41" style="margin:0 17px 0 6px">成交量</fit-text><down-mark></down-mark></chip-button>
            <fit-text w="94" s="46" style="margin-left:5px">46.07万</fit-text><fit-text w="11" s="38" style="margin-left:10px">↓</fit-text>
            <fit-text class="y" w="153" s="46" style="margin-left:15px">MA1:32.80万</fit-text><fit-text class="y" w="11" s="38" style="margin-left:9px">↑</fit-text>
            <fit-text class="p" w="155" s="46" style="margin-left:15px">MA2:20.30万</fit-text><fit-text class="p" w="11" s="38" style="margin-left:10px">↑</fit-text>
            <fit-text class="g" w="150" s="46" style="margin-left:15px">MA3:13.22万</fit-text><fit-text class="g" w="11" s="38" style="margin-left:9px">↑</fit-text>
            <fit-text w="228" s="45" style="margin-left:16px;color:#808080">虚拟成交量:73.99万</fit-text>
            <div class="fold"><svg width="20" height="34" viewBox="0 0 20 34" fill="none" stroke="#fff" stroke-width="4"><path d="M18 2L4 17L18 32" /></svg></div>
          </indicator-head>
          <volume-chart></volume-chart>
          <indicator-head>
            <chip-button style="width:172px"><fit-text w="118" s="43" style="margin:0 18px 0 7px">MACD</fit-text><down-mark></down-mark></chip-button>
            <fit-text w="171" s="47" style="margin-left:7px">DIF:0.85</fit-text><fit-text w="18" s="40" style="margin-left:15px">↓</fit-text>
            <fit-text class="y" w="190" s="47" style="margin-left:29px">DEA:0.55</fit-text><fit-text class="y" w="18" s="40" style="margin-left:15px">↑</fit-text>
            <fit-text class="p" w="140" s="47" style="margin-left:29px">M:0.60</fit-text><fit-text class="p" w="18" s="40" style="margin-left:15px">↓</fit-text>
          </indicator-head>
          <macd-chart></macd-chart>
          <indicator-head>
            <chip-button style="width:126px"><fit-text w="69" s="43" style="margin:0 18px 0 9px">KDJ</fit-text><down-mark></down-mark></chip-button>
            <fit-text w="153" s="47" style="margin-left:8px">K:69.86</fit-text><fit-text w="17" s="40" style="margin-left:15px">↓</fit-text>
            <fit-text class="y" w="151" s="47" style="margin-left:29px">D:85.12</fit-text><fit-text class="y" w="17" s="40" style="margin-left:16px">↓</fit-text>
            <fit-text class="p" w="144" s="47" style="margin-left:26px">J:39.35</fit-text><fit-text class="p" w="17" s="40" style="margin-left:16px">↓</fit-text>
          </indicator-head>
          <kdj-chart></kdj-chart>
          <date-axis></date-axis>
          <ask-banner></ask-banner>
          <div class="rule"></div>
          <bottom-bar></bottom-bar>
        `
      )
    </script>
  </body>
</html>
